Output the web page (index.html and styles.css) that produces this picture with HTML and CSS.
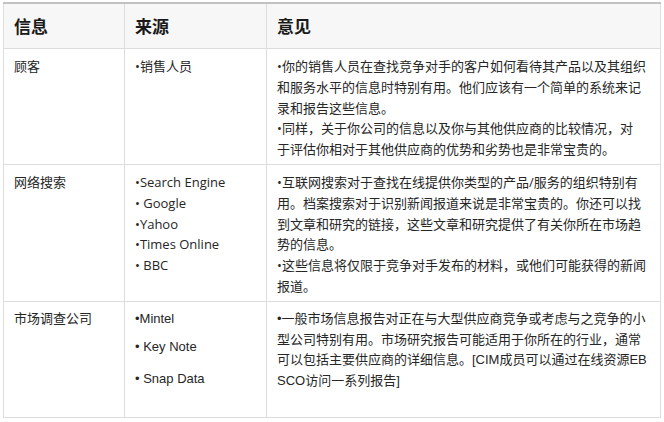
FILE: index.html
```html
<!DOCTYPE html>
<html lang="zh-CN">
<head>
<meta charset="utf-8">
<title>信息来源</title>
<link rel="stylesheet" href="styles.css">
</head>
<body>
<div class="wrap">
<table class="info-table">
  <colgroup>
    <col class="c1">
    <col class="c2">
    <col class="c3">
  </colgroup>
  <thead>
    <tr>
      <th>信息</th>
      <th>来源</th>
      <th>意见</th>
    </tr>
  </thead>
  <tbody>
    <tr>
      <td>顾客</td>
      <td>•销售人员</td>
      <td class="note">•你的销售人员在查找竞争对手的客户如何看待其产品以及其组织<br>和服务水平的信息时特别有用。他们应该有一个简单的系统来记<br>录和报告这些信息。<br>•同样，关于你公司的信息以及你与其他供应商的比较情况，对<br>于评估你相对于其他供应商的优势和劣势也是非常宝贵的。</td>
    </tr>
    <tr>
      <td>网络搜索</td>
      <td>•Search Engine<br>• Google<br>•Yahoo<br>•Times Online<br>• BBC</td>
      <td class="note">•互联网搜索对于查找在线提供你类型的产品/服务的组织特别有<br>用。档案搜索对于识别新闻报道来说是非常宝贵的。你还可以找<br>到文章和研究的链接，这些文章和研究提供了有关你所在市场趋<br>势的信息。<br>•这些信息将仅限于竞争对手发布的材料，或他们可能获得的新闻<br>报道。</td>
    </tr>
    <tr class="arial">
      <td>市场调查公司</td>
      <td>
        <div class="item">•Mintel</div>
        <div class="item gap-sm">• Key Note</div>
        <div class="item gap-lg tail">• Snap Data</div>
      </td>
      <td class="note">•一般市场信息报告对正在与大型供应商竞争或考虑与之竞争的小<br>型公司特别有用。市场研究报告可能适用于你所在的行业，通常<br>可以包括主要供应商的详细信息。[CIM成员可以通过在线资源EB<br>SCO访问一系列报告]</td>
    </tr>
  </tbody>
</table>
</div>
</body>
</html>
```

FILE: styles.css
```css
html, body {
  margin: 0;
  padding: 0;
  background: #ffffff;
}

.wrap {
  padding: 2px 0 0 3px;
}

.info-table {
  border-collapse: collapse;
  table-layout: fixed;
  width: 657px;
  font-family: "Open Sans", "Noto Sans CJK SC", sans-serif;
  font-size: 13px;
  line-height: 20.8px;
  color: #262626;
}

.c1 { width: 121px; }
.c2 { width: 142px; }
.c3 { width: 394px; }

.info-table th,
.info-table td {
  border: 1px solid #dddddd;
  text-align: left;
  vertical-align: top;
}

.info-table thead tr {
  background: #f7f7f7;
}

.info-table th {
  border-top: 2px solid #c2c2c2;
  height: 44px;
  padding: 0 10px;
  vertical-align: middle;
  font-family: "Noto Sans CJK SC", sans-serif;
  font-size: 17px;
  font-weight: bold;
  line-height: 44px;
  color: #1a1a1a;
}

.info-table td {
  padding: 7px 10px 4px 10px;
  white-space: nowrap;
}

.arial td {
  font-family: "Liberation Sans", "Noto Sans CJK SC", sans-serif;
}

.item {
  line-height: 20.8px;
}

.gap-sm {
  margin-top: 7px;
}

.gap-lg {
  margin-top: 12px;
}

.tail {
  margin-bottom: 23px;
}
```
